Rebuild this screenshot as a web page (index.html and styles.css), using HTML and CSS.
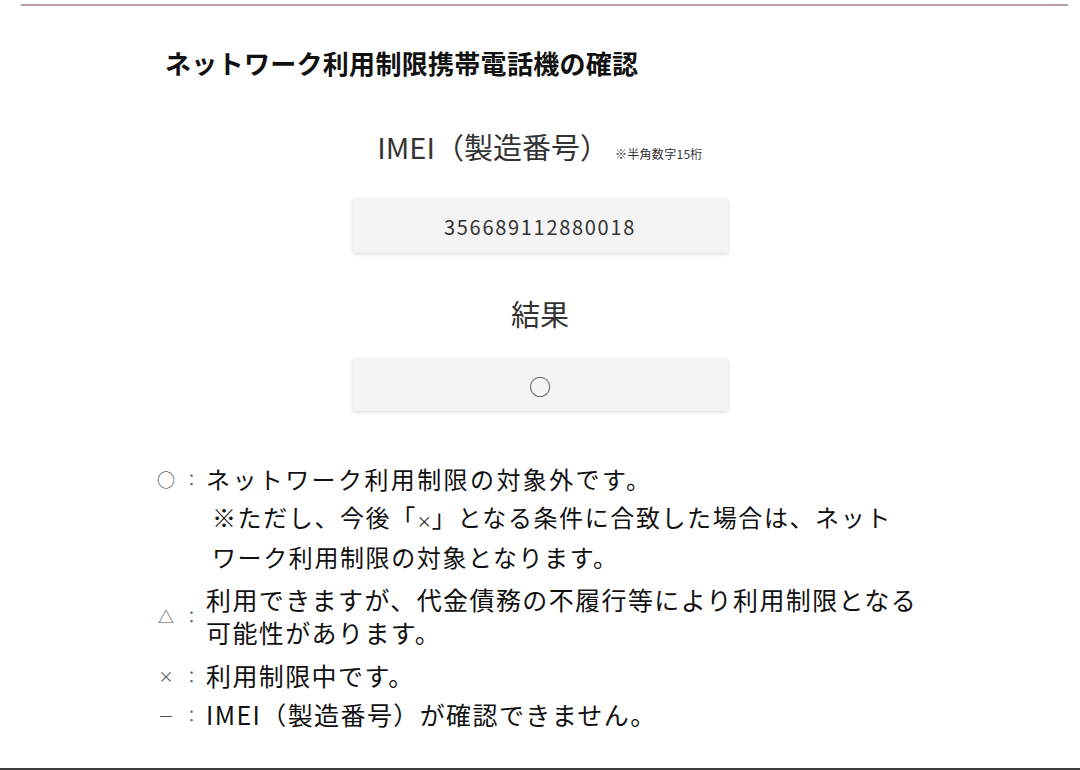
FILE: index.html
```html
<!DOCTYPE html>
<html lang="ja">
<head>
  <meta charset="utf-8">
  <title>ネットワーク利用制限携帯電話機の確認</title>
  <link rel="stylesheet" href="styles.css">
</head>
<body>
  <div class="page">
    <div class="top-rule"></div>

    <h1 class="title">ネットワーク利用制限携帯電話機の確認</h1>

    <div class="field">
      <div class="field-label">IMEI（製造番号）<span class="field-note">※半角数字15桁</span></div>
      <div class="field-box">356689112880018</div>
    </div>

    <div class="field field-result">
      <div class="field-label">結果</div>
      <div class="field-box field-box-result">○</div>
    </div>

    <div class="legend">
      <div class="legend-item">
        <span class="legend-mark mark-circle">○</span>
        <span class="legend-colon">：</span>
        <span class="legend-text">ネットワーク利用制限の対象外です。</span>
      </div>
      <div class="legend-note">※ただし、今後「<span class="small-cross">×</span>」となる条件に合致した場合は、ネット<br>ワーク利用制限の対象となります。</div>

      <div class="legend-item item-tall item-triangle">
        <span class="legend-mark mark-triangle">△</span>
        <span class="legend-colon">：</span>
        <span class="legend-text">利用できますが、代金債務の不履行等により利用制限となる<br>可能性があります。</span>
      </div>

      <div class="legend-item item-tall item-cross">
        <span class="legend-mark mark-cross">×</span>
        <span class="legend-colon">：</span>
        <span class="legend-text">利用制限中です。</span>
      </div>

      <div class="legend-item item-tall">
        <span class="legend-mark mark-dash">－</span>
        <span class="legend-colon">：</span>
        <span class="legend-text">IMEI（製造番号）が確認できません。</span>
      </div>
    </div>
  </div>
  <div class="bottom-rule"></div>
</body>
</html>
```

FILE: styles.css
```css
:root {
  --text-color: #333;
  --title-color: #111;
  --box-bg: #f4f4f4;
  --rule-top: #b99ca2;
  --rule-bottom: #3c3c3c;
}

* {
  margin: 0;
  padding: 0;
  box-sizing: border-box;
}

body {
  width: 1080px;
  height: 770px;
  overflow: hidden;
  font-family: "Noto Sans CJK JP", "Noto Sans", sans-serif;
  color: var(--text-color);
  background-color: #fff;
  display: flex;
  flex-direction: column;
}

.page {
  flex: 1;
  padding-top: 4px;
}

.top-rule {
  height: 2px;
  margin: 0 12px 0 21px;
  background-color: var(--rule-top);
}

.bottom-rule {
  height: 2px;
  background-color: var(--rule-bottom);
}

.title {
  margin: 38px 0 0 165px;
  font-size: 26px;
  font-weight: 700;
  line-height: 38px;
  color: var(--title-color);
  letter-spacing: 0.3px;
}

.field {
  display: flex;
  flex-direction: column;
  align-items: center;
  margin-top: 44px;
}

.field-result {
  margin-top: 40px;
}

.field-label {
  font-size: 29px;
  line-height: 40px;
  color: var(--text-color);
}

.field-note {
  font-size: 12px;
  margin-left: 6px;
  letter-spacing: 0.3px;
}

.field-box {
  width: 375px;
  height: 54px;
  margin-top: 25px;
  display: flex;
  align-items: center;
  justify-content: center;
  background-color: var(--box-bg);
  border-radius: 2px;
  box-shadow: 0 1px 4px rgba(0, 0, 0, 0.16);
  font-size: 20px;
  letter-spacing: 1.7px;
  color: var(--text-color);
}

.field-box-result {
  height: 52px;
  margin-top: 26px;
  font-size: 22px;
  letter-spacing: 0;
  color: #444;
}

.legend {
  margin: 50px 0 0 155px;
}

.legend-item {
  display: flex;
  align-items: center;
}

.legend-mark {
  width: 22px;
  font-size: 16px;
  text-align: center;
  color: #555;
}

.mark-circle {
  font-size: 18px;
}

.mark-cross {
  font-size: 15px;
}

.legend-colon {
  width: 29px;
  font-size: 16px;
  text-align: center;
  color: #666;
}

.legend-text {
  font-size: 24px;
  line-height: 36px;
  letter-spacing: 2.4px;
  color: var(--title-color);
}

.legend-note {
  margin: 2px 0 0 57px;
  font-size: 24px;
  line-height: 36px;
  letter-spacing: 1.6px;
  color: var(--title-color);
}

.small-cross {
  font-size: 15px;
  letter-spacing: 0;
}

.item-tall {
  margin-top: 6px;
}

.item-triangle {
  margin-top: 8px;
}

.item-cross {
  margin-top: 10px;
}

.item-tall .legend-text {
  font-size: 25px;
  line-height: 33px;
  letter-spacing: 1.4px;
}
```
